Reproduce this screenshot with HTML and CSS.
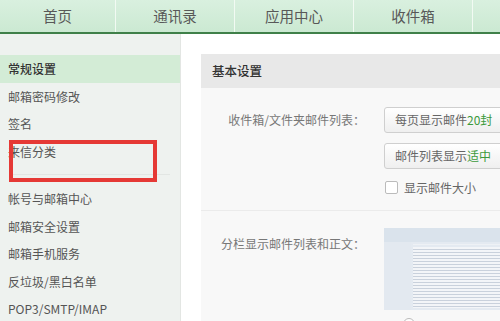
FILE: index.html
```html
<!DOCTYPE html>
<html lang="zh-CN">
<head>
<meta charset="utf-8">
<title>设置</title>
<link rel="stylesheet" href="styles.css">
</head>
<body>
<div class="topnav">
  <div class="tab tab-first">首页</div>
  <div class="tab">通讯录</div>
  <div class="tab">应用中心</div>
  <div class="tab">收件箱</div>
  <div class="tab"></div>
</div>
<div class="layout">
  <aside class="sidebar">
    <ul class="group">
      <li class="item active">常规设置</li>
      <li class="item">邮箱密码修改</li>
      <li class="item">签名</li>
      <li class="item">来信分类</li>
    </ul>
    <ul class="group group-second">
      <li class="item">帐号与邮箱中心</li>
      <li class="item">邮箱安全设置</li>
      <li class="item">邮箱手机服务</li>
      <li class="item">反垃圾/黑白名单</li>
      <li class="item">POP3/SMTP/IMAP</li>
    </ul>
    <div class="highlight"></div>
  </aside>
  <main class="main">
    <section class="panel">
      <div class="panel-head">基本设置</div>
      <div class="panel-body">
        <div class="row">
          <div class="label">收件箱/文件夹邮件列表：</div>
          <div class="controls">
            <div class="select">每页显示邮件<span class="green">20封</span></div>
            <div class="select">邮件列表显示<span class="green">适中</span></div>
            <label class="check"><span class="box"></span>显示邮件大小</label>
          </div>
        </div>
        <div class="row row-split">
          <div class="label label-top">分栏显示邮件列表和正文：</div>
          <div class="controls">
            <div class="preview">
              <div class="preview-bar"></div>
              <div class="preview-main">
                <div class="preview-col"></div>
                <div class="preview-lines"></div>
              </div>
            </div>
            <div class="radio-row"><span class="radio"></span></div>
          </div>
        </div>
      </div>
    </section>
  </main>
</div>
</body>
</html>
```
FILE: styles.css
```css
* { box-sizing: border-box; }
html, body { margin: 0; padding: 0; }
body {
  width: 500px;
  height: 321px;
  overflow: hidden;
  background: #fff;
  font-family: "Noto Sans CJK SC", "Microsoft YaHei", sans-serif;
  font-size: 12px;
  color: #555;
}
.topnav {
  display: flex;
  height: 34px;
  overflow: hidden;
  background: linear-gradient(#d9f0df, #cbe9d2);
  border-bottom: 2px solid #3f8049;
  box-shadow: 0 1px 0 #9cc9a3;
}
.tab {
  flex: 0 0 119px;
  height: 32px;
  line-height: 32px;
  text-align: center;
  font-size: 14.5px;
  color: #585858;
  border-right: 1px solid #f2faf3;
}
.tab-first { flex-basis: 116px; }
.layout {
  display: flex;
  height: 287px;
}
.sidebar {
  position: relative;
  width: 181px;
  flex: 0 0 181px;
  background: #eef2ef;
  border-right: 1px solid #e3e6e3;
  padding-top: 21px;
}
.group {
  list-style: none;
  margin: 0;
  padding: 0;
}
.group-second {
  margin-top: 20px;
  position: relative;
}
.group-second::before {
  content: "";
  position: absolute;
  left: 10px;
  right: 10px;
  top: -11px;
  height: 1px;
  background: #e2e6e3;
}
.item {
  height: 27.5px;
  line-height: 27.5px;
  padding-left: 8px;
  color: #555;
}
.item.active {
  background: #d3ecd6;
  color: #333;
  font-weight: 500;
}
.highlight {
  position: absolute;
  left: 9px;
  top: 106px;
  width: 148px;
  height: 42px;
  border: 4px solid #e53935;
}
.main {
  flex: 1;
  padding: 20px 0 0 20px;
  background: #fff;
  overflow: hidden;
}
.panel {
  background: #f8f8f8;
  height: 100%;
  overflow: hidden;
}
.panel-head {
  height: 34px;
  line-height: 34px;
  background: #e8e8e8;
  padding-left: 11px;
  color: #333;
  font-size: 12.5px;
  font-weight: 500;
}
.panel-body {
  padding-top: 19px;
}
.row {
  display: flex;
}
.row-split {
  margin-top: 16px;
  padding-top: 17px;
  border-top: 1px solid #ebebeb;
}
.label {
  flex: 0 0 183px;
  padding-right: 19px;
  text-align: right;
  color: #777;
  line-height: 26px;
}
.label-top {
  padding-top: 3px;
}
.controls {
  display: flex;
  flex-direction: column;
  flex: 1;
  min-width: 0;
  overflow: hidden;
}
.select {
  width: 160px;
  height: 26px;
  line-height: 24px;
  padding-left: 10px;
  border: 1px solid #cfcfcf;
  border-radius: 3px;
  background: linear-gradient(#ffffff, #efefef);
  color: #666;
  white-space: nowrap;
}
.select + .select { margin-top: 10px; }
.green { color: #3c9a3c; }
.check {
  display: flex;
  align-items: center;
  margin-top: 11px;
  height: 14px;
  color: #666;
}
.box {
  width: 13px;
  height: 13px;
  border: 1px solid #bbb;
  border-radius: 2px;
  background: #fff;
  margin-right: 6px;
  margin-left: 1px;
}
.preview {
  width: 200px;
  height: 82px;
  background: #e4eaf1;
  display: flex;
  flex-direction: column;
}
.preview-bar {
  height: 14px;
  background: #dae3ec;
}
.preview-main {
  flex: 1;
  display: flex;
}
.preview-col {
  width: 27px;
  background: #e3e9f0;
}
.preview-lines {
  flex: 1;
  margin: 2px 0 2px 2px;
  background:
    repeating-linear-gradient(#f3f5f8 0 1px, #c9d1dc 1px 2px, #f3f5f8 2px 3px);
  background-clip: content-box;
  padding-top: 2px;
  border-top: 1px solid #eef1f5;
}
.radio-row {
  height: 12px;
  margin-top: 6px;
  padding-left: 19px;
}
.radio {
  display: inline-block;
  width: 12px;
  height: 12px;
  border: 1px solid #bbb;
  border-radius: 50%;
  background: #fff;
}
```
